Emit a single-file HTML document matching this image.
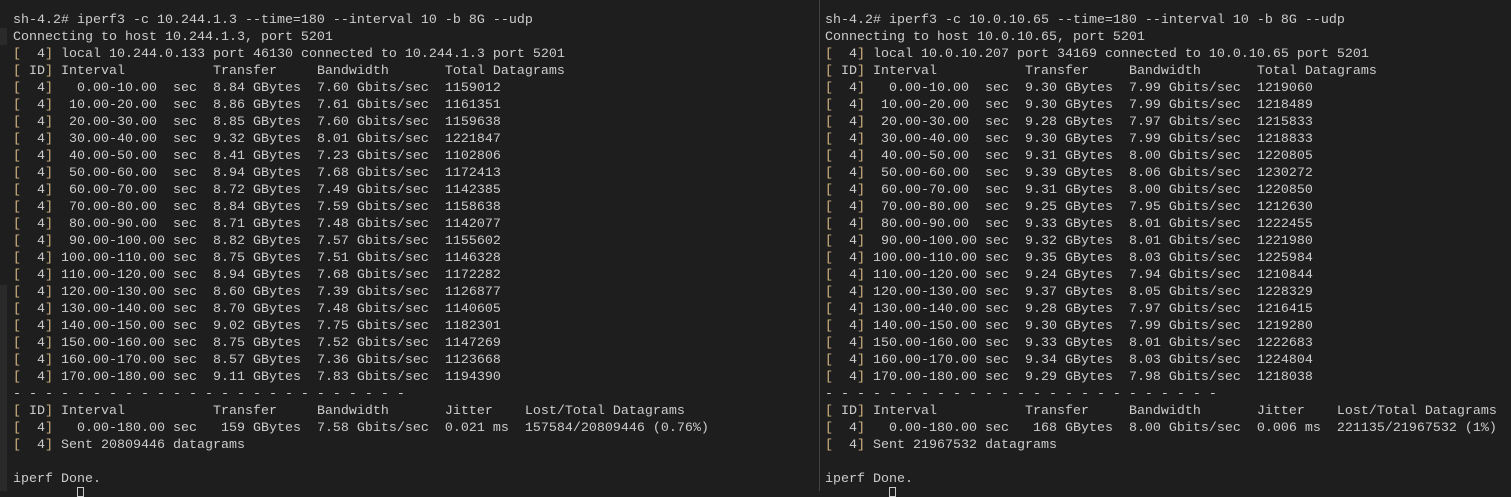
<!DOCTYPE html>
<html><head><meta charset="utf-8"><style>
html,body{margin:0;padding:0;background:#1e1e1e;width:1511px;height:491px;overflow:hidden}
pre{position:absolute;top:12px;margin:0;font-family:"Liberation Mono",monospace;font-size:13.33px;line-height:17px;color:#cccccc}
b{font-weight:normal;color:#d2b482}
#l{left:13px}#r{left:825px}
#div{position:absolute;left:819px;top:0;width:1px;height:491px;background:#444}
#sb{position:absolute;left:0;top:285px;width:7px;height:206px;background:#2a2a2a}
#sb2{position:absolute;left:0;top:28px;width:7px;height:17px;background:#2a2a2a}
.cur{position:absolute;top:487px;width:7px;height:10px;border:1px solid #ccc;box-sizing:border-box}
</style></head><body>
<div id="sb"></div><div id="sb2"></div>
<div id="div"></div>
<pre id="l">sh-4.2# iperf3 -c 10.244.1.3 --time=180 --interval 10 -b 8G --udp
Connecting to host 10.244.1.3, port 5201
<b>[</b>  4<b>]</b> local 10.244.0.133 port 46130 connected to 10.244.1.3 port 5201
<b>[</b> ID<b>]</b> Interval           Transfer     Bandwidth       Total Datagrams
<b>[</b>  4<b>]</b>   0.00-10.00  sec  8.84 GBytes  7.60 Gbits/sec  1159012
<b>[</b>  4<b>]</b>  10.00-20.00  sec  8.86 GBytes  7.61 Gbits/sec  1161351
<b>[</b>  4<b>]</b>  20.00-30.00  sec  8.85 GBytes  7.60 Gbits/sec  1159638
<b>[</b>  4<b>]</b>  30.00-40.00  sec  9.32 GBytes  8.01 Gbits/sec  1221847
<b>[</b>  4<b>]</b>  40.00-50.00  sec  8.41 GBytes  7.23 Gbits/sec  1102806
<b>[</b>  4<b>]</b>  50.00-60.00  sec  8.94 GBytes  7.68 Gbits/sec  1172413
<b>[</b>  4<b>]</b>  60.00-70.00  sec  8.72 GBytes  7.49 Gbits/sec  1142385
<b>[</b>  4<b>]</b>  70.00-80.00  sec  8.84 GBytes  7.59 Gbits/sec  1158638
<b>[</b>  4<b>]</b>  80.00-90.00  sec  8.71 GBytes  7.48 Gbits/sec  1142077
<b>[</b>  4<b>]</b>  90.00-100.00 sec  8.82 GBytes  7.57 Gbits/sec  1155602
<b>[</b>  4<b>]</b> 100.00-110.00 sec  8.75 GBytes  7.51 Gbits/sec  1146328
<b>[</b>  4<b>]</b> 110.00-120.00 sec  8.94 GBytes  7.68 Gbits/sec  1172282
<b>[</b>  4<b>]</b> 120.00-130.00 sec  8.60 GBytes  7.39 Gbits/sec  1126877
<b>[</b>  4<b>]</b> 130.00-140.00 sec  8.70 GBytes  7.48 Gbits/sec  1140605
<b>[</b>  4<b>]</b> 140.00-150.00 sec  9.02 GBytes  7.75 Gbits/sec  1182301
<b>[</b>  4<b>]</b> 150.00-160.00 sec  8.75 GBytes  7.52 Gbits/sec  1147269
<b>[</b>  4<b>]</b> 160.00-170.00 sec  8.57 GBytes  7.36 Gbits/sec  1123668
<b>[</b>  4<b>]</b> 170.00-180.00 sec  9.11 GBytes  7.83 Gbits/sec  1194390
- - - - - - - - - - - - - - - - - - - - - - - - -
<b>[</b> ID<b>]</b> Interval           Transfer     Bandwidth       Jitter    Lost/Total Datagrams
<b>[</b>  4<b>]</b>   0.00-180.00 sec   159 GBytes  7.58 Gbits/sec  0.021 ms  157584/20809446 (0.76%)
<b>[</b>  4<b>]</b> Sent 20809446 datagrams

iperf Done.</pre>
<pre id="r">sh-4.2# iperf3 -c 10.0.10.65 --time=180 --interval 10 -b 8G --udp
Connecting to host 10.0.10.65, port 5201
<b>[</b>  4<b>]</b> local 10.0.10.207 port 34169 connected to 10.0.10.65 port 5201
<b>[</b> ID<b>]</b> Interval           Transfer     Bandwidth       Total Datagrams
<b>[</b>  4<b>]</b>   0.00-10.00  sec  9.30 GBytes  7.99 Gbits/sec  1219060
<b>[</b>  4<b>]</b>  10.00-20.00  sec  9.30 GBytes  7.99 Gbits/sec  1218489
<b>[</b>  4<b>]</b>  20.00-30.00  sec  9.28 GBytes  7.97 Gbits/sec  1215833
<b>[</b>  4<b>]</b>  30.00-40.00  sec  9.30 GBytes  7.99 Gbits/sec  1218833
<b>[</b>  4<b>]</b>  40.00-50.00  sec  9.31 GBytes  8.00 Gbits/sec  1220805
<b>[</b>  4<b>]</b>  50.00-60.00  sec  9.39 GBytes  8.06 Gbits/sec  1230272
<b>[</b>  4<b>]</b>  60.00-70.00  sec  9.31 GBytes  8.00 Gbits/sec  1220850
<b>[</b>  4<b>]</b>  70.00-80.00  sec  9.25 GBytes  7.95 Gbits/sec  1212630
<b>[</b>  4<b>]</b>  80.00-90.00  sec  9.33 GBytes  8.01 Gbits/sec  1222455
<b>[</b>  4<b>]</b>  90.00-100.00 sec  9.32 GBytes  8.01 Gbits/sec  1221980
<b>[</b>  4<b>]</b> 100.00-110.00 sec  9.35 GBytes  8.03 Gbits/sec  1225984
<b>[</b>  4<b>]</b> 110.00-120.00 sec  9.24 GBytes  7.94 Gbits/sec  1210844
<b>[</b>  4<b>]</b> 120.00-130.00 sec  9.37 GBytes  8.05 Gbits/sec  1228329
<b>[</b>  4<b>]</b> 130.00-140.00 sec  9.28 GBytes  7.97 Gbits/sec  1216415
<b>[</b>  4<b>]</b> 140.00-150.00 sec  9.30 GBytes  7.99 Gbits/sec  1219280
<b>[</b>  4<b>]</b> 150.00-160.00 sec  9.33 GBytes  8.01 Gbits/sec  1222683
<b>[</b>  4<b>]</b> 160.00-170.00 sec  9.34 GBytes  8.03 Gbits/sec  1224804
<b>[</b>  4<b>]</b> 170.00-180.00 sec  9.29 GBytes  7.98 Gbits/sec  1218038
- - - - - - - - - - - - - - - - - - - - - - - - -
<b>[</b> ID<b>]</b> Interval           Transfer     Bandwidth       Jitter    Lost/Total Datagrams
<b>[</b>  4<b>]</b>   0.00-180.00 sec   168 GBytes  8.00 Gbits/sec  0.006 ms  221135/21967532 (1%)
<b>[</b>  4<b>]</b> Sent 21967532 datagrams

iperf Done.</pre>
<div class="cur" style="left:77px"></div>
<div class="cur" style="left:889px"></div>
</body></html>
